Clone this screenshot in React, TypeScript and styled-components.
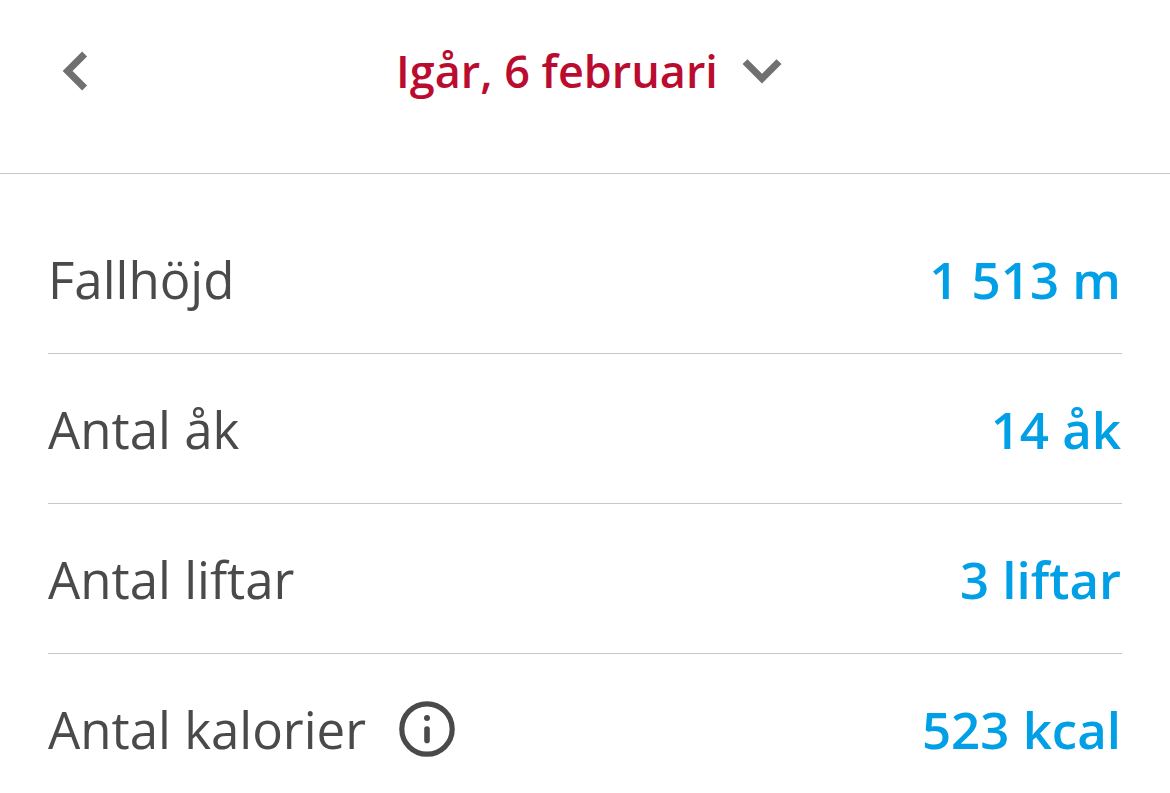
import React from 'react';
import styled, { createGlobalStyle } from 'styled-components';

const Global = createGlobalStyle`
  * { box-sizing: border-box; }
  body { margin: 0; background: #fff; font-family: "Open Sans", "Noto Sans", sans-serif; color: #4a4a4a; }
`;

const Header = styled.header`
  display: grid;
  grid-template-columns: 54px 1fr 46px;
  align-items: center;
  height: 174px;
  padding: 0 48px 32px;
  border-bottom: 1px solid #c8c8c8;
`;

const IconButton = styled.button`
  display: flex;
  align-items: center;
  justify-content: center;
  padding: 0;
  border: 0;
  background: none;
  color: inherit;
  cursor: pointer;
`;

const DateButton = styled.button`
  display: flex;
  align-items: center;
  justify-content: center;
  gap: 24px;
  justify-self: center;
  padding: 0;
  border: 0;
  background: none;
  color: #ba0c2f;
  font: 600 45px/64px "Open Sans", "Noto Sans", sans-serif;
  cursor: pointer;
`;

const Stats = styled.dl`
  margin: 0;
  padding: 30px 48px 0;
`;

const Row = styled.div`
  display: flex;
  align-items: center;
  justify-content: space-between;
  height: 150px;
  border-bottom: 1px solid #c8c8c8;
  &:last-child { border-bottom-color: transparent; }
`;

const Label = styled.dt`
  display: flex;
  align-items: center;
  gap: 33px;
  font-size: 51px;
  line-height: 72px;
`;

const Value = styled.dd`
  margin: 0;
  padding-right: 1px;
  color: #009fe6;
  font-size: 51px;
  font-weight: 600;
  line-height: 72px;
`;

const stats = [
  { label: 'Fallhöjd', value: '1 513 m' },
  { label: 'Antal åk', value: '14 åk' },
  { label: 'Antal liftar', value: '3 liftar' },
  { label: 'Antal kalorier', value: '523 kcal', info: true },
];

const ChevronLeft = () => (
  <svg width="26" height="40" viewBox="0 0 26 40" fill="none" stroke="#707070" strokeWidth="7" aria-hidden="true">
    <path d="M22.6 3 5.6 20l17 17" />
  </svg>
);

const ChevronDown = () => (
  <svg width="40" height="26" viewBox="0 0 40 26" fill="none" stroke="#707070" strokeWidth="7" aria-hidden="true">
    <path d="M3 3.6l17 17L37 3.6" />
  </svg>
);

const InfoIcon = () => (
  <svg width="56" height="56" viewBox="0 0 56 56" fill="none" stroke="#4a4a4a" aria-hidden="true">
    <circle cx="28" cy="28" r="25.2" strokeWidth="5.2" />
    <path d="M28 28v11.4" strokeWidth="5.6" strokeLinecap="round" />
    <circle cx="28" cy="17" r="3" fill="#4a4a4a" stroke="none" />
  </svg>
);

export default function App() {
  return (
    <main>
      <Global />
      <Header>
        <IconButton type="button" aria-label="Föregående dag"><ChevronLeft /></IconButton>
        <DateButton type="button">Igår, 6 februari<ChevronDown /></DateButton>
      </Header>
      <Stats>
        {stats.map((s) => (
          <Row key={s.label}>
            <Label>
              {s.label}
              {s.info && <IconButton type="button" aria-label="Information"><InfoIcon /></IconButton>}
            </Label>
            <Value>{s.value}</Value>
          </Row>
        ))}
      </Stats>
    </main>
  );
}
